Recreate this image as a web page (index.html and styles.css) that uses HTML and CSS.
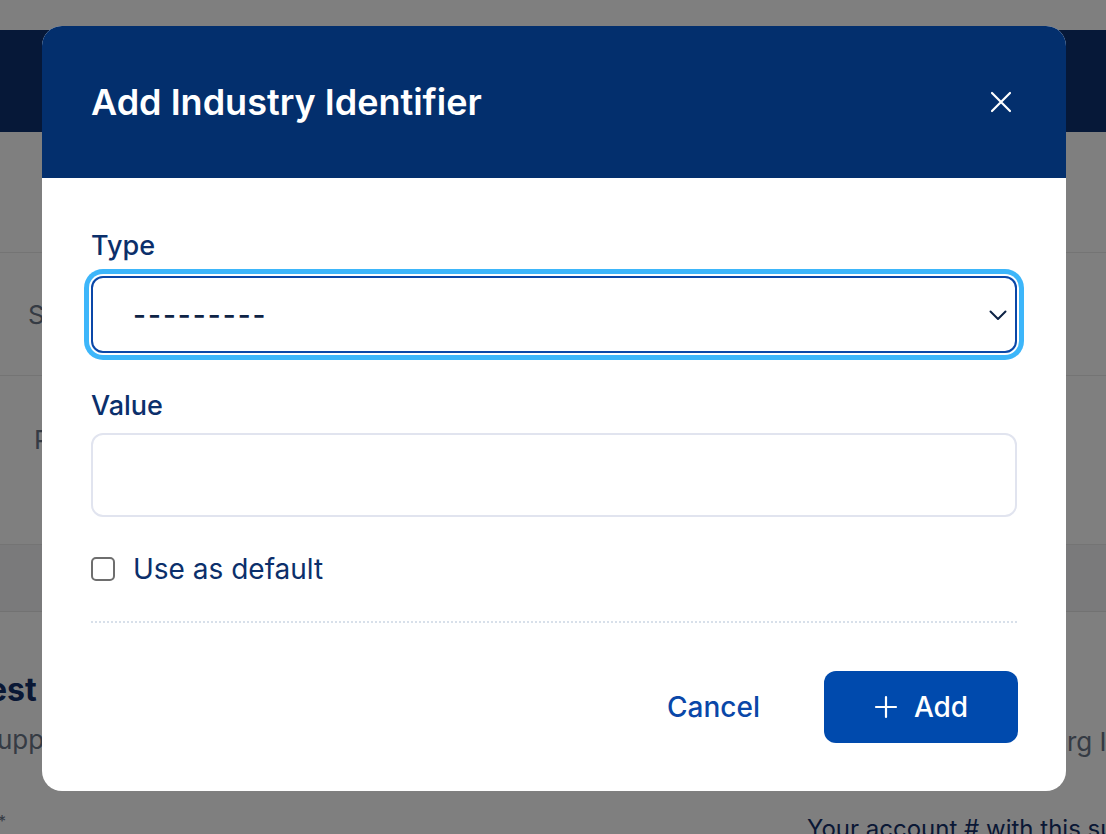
FILE: index.html
```html
<!DOCTYPE html>
<html lang="en">
<head>
  <meta charset="UTF-8" />
  <meta name="viewport" content="width=device-width, initial-scale=1" />
  <title>Add Industry Identifier</title>
  <link rel="stylesheet" href="styles.css">
</head>
<body>
  <div class="page">
    <div class="page-top"></div>
    <header class="page-header"></header>
    <div class="page-gap"></div>
    <div class="page-row row-short"><span class="row-label">Supplier name</span></div>
    <div class="page-row row-tall"><span class="row-label row-label-p">Phone number</span></div>
    <div class="page-band"></div>
    <div class="page-lower">
      <div class="lower-left">
        <h2 class="lower-title">est</h2>
        <p class="lower-text">upp</p>
        <p class="lower-star">*</p>
      </div>
      <div class="lower-right">
        <p class="lower-org">Org Id</p>
        <p class="lower-account">Your account # with this supplier</p>
      </div>
    </div>
  </div>

  <div class="overlay"></div>

  <div class="modal">
    <div class="modal-header">
      <h1 class="modal-title">Add Industry Identifier</h1>
      <button class="close-btn" aria-label="Close">
        <svg width="22" height="22" viewBox="0 0 22 22" fill="none" stroke="#ffffff" stroke-width="2.2" stroke-linecap="round">
          <path d="M2 2 L20 20 M20 2 L2 20" />
        </svg>
      </button>
    </div>

    <div class="modal-body">
      <label class="field-label">Type</label>
      <div class="select-box">
        <span class="select-text">---------</span>
        <svg class="chevron" width="18" height="11" viewBox="0 0 18 11" fill="none" stroke="#0d2345" stroke-width="2" stroke-linecap="round" stroke-linejoin="round">
          <path d="M1.5 1.5 L9 9 L16.5 1.5" />
        </svg>
      </div>

      <label class="field-label label-value">Value</label>
      <div class="text-input"></div>

      <div class="check-row">
        <span class="checkbox"></span>
        <span class="check-label">Use as default</span>
      </div>

      <div class="divider"></div>

      <div class="modal-footer">
        <button class="cancel-btn">Cancel</button>
        <button class="add-btn">
          <svg width="24" height="24" viewBox="0 0 24 24" fill="none" stroke="#ffffff" stroke-width="2.2" stroke-linecap="round">
            <path d="M12 2 V22 M2 12 H22" />
          </svg>
          Add
        </button>
      </div>
    </div>
  </div>
</body>
</html>
```

FILE: styles.css
```css
body {
  margin: 0;
  font-family: 'Inter', 'Noto Sans', sans-serif;
  background: #ffffff;
  overflow: hidden;
}

/* page behind the dialog */
.page {
  width: 1106px;
  height: 834px;
  overflow: hidden;
  white-space: nowrap;
}
.page-top {
  height: 30px;
}
.page-header {
  height: 102px;
  background: #0c3070;
}
.page-gap {
  height: 120px;
  border-bottom: 1px solid #e8e8e8;
}
.page-row {
  border-bottom: 1px solid #e8e8e8;
  padding-left: 28px;
  font-size: 26px;
  color: #6b7688;
}
.row-short {
  height: 122px;
  display: flex;
  align-items: center;
}
.row-tall {
  height: 169px;
  padding-top: 48px;
  box-sizing: border-box;
}
.row-label-p {
  margin-left: 6px;
}
.page-band {
  height: 66px;
  background: #f4f5f7;
  border-bottom: 1px solid #e4e4e4;
}
.page-lower {
  display: flex;
}
.lower-left {
  width: 807px;
  margin-left: -12px;
}
.lower-title {
  margin: 58px 0 0;
  font-size: 32px;
  line-height: 40px;
  font-weight: 700;
  color: #14306b;
}
.lower-text {
  margin: 15px 0 0 9px;
  font-size: 26px;
  line-height: 30px;
  color: #6b7688;
}
.lower-star {
  margin: 56px 0 0 10px;
  font-size: 16px;
  color: #6b7688;
}
.lower-right {
  width: 299px;
  margin-left: 12px;
}
.lower-org {
  margin: 115px 0 0 240px;
  font-size: 26px;
  line-height: 30px;
  color: #6b7688;
}
.lower-account {
  margin: 57px 0 0;
  font-size: 24px;
  line-height: 30px;
  color: #14306b;
}

.overlay {
  position: fixed;
  inset: 0;
  background: rgba(0, 0, 0, 0.5);
}

/* dialog */
.modal {
  position: fixed;
  left: 42px;
  top: 26px;
  width: 1024px;
  background: #ffffff;
  border-radius: 20px;
  overflow: hidden;
}
.modal-header {
  height: 152px;
  background: #032f6d;
  display: flex;
  align-items: center;
  justify-content: space-between;
  padding: 0 54px 0 49px;
}
.modal-title {
  margin: 0;
  color: #ffffff;
  font-size: 36px;
  font-weight: 600;
}
.close-btn {
  background: none;
  border: none;
  padding: 0;
  display: flex;
  cursor: pointer;
}

.modal-body {
  padding: 52px 49px 48px;
}
.field-label {
  display: block;
  font-size: 27px;
  line-height: 32px;
  font-weight: 500;
  color: #0b2f6b;
  margin-bottom: 14px;
}
.label-value {
  margin-top: 37px;
  margin-bottom: 11px;
}
.select-box {
  position: relative;
  height: 77px;
  box-sizing: border-box;
  border: 2px solid #0a47a8;
  border-radius: 12px;
  box-shadow: 0 0 0 2px #ffffff, 0 0 0 7px #3db6fa;
  display: flex;
  align-items: center;
  padding-left: 40px;
}
.select-text {
  font-size: 28px;
  font-weight: 500;
  color: #0d2345;
  letter-spacing: 2px;
}
.chevron {
  position: absolute;
  right: 8px;
  top: 32px;
}
.text-input {
  height: 84px;
  box-sizing: border-box;
  border: 2px solid #e1e4ef;
  border-radius: 12px;
}
.check-row {
  display: flex;
  align-items: center;
  gap: 18px;
  margin-top: 35px;
}
.checkbox {
  width: 24px;
  height: 24px;
  box-sizing: border-box;
  border: 2px solid #6e6e6e;
  border-radius: 5px;
}
.check-label {
  font-size: 28px;
  line-height: 34px;
  color: #0b2f6b;
}
.divider {
  margin-top: 35px;
  border-top: 2px dotted #d8e0ea;
}
.modal-footer {
  display: flex;
  justify-content: flex-end;
  align-items: center;
  gap: 64px;
  margin-top: 48px;
}
.cancel-btn {
  background: none;
  border: none;
  padding: 0;
  font-family: inherit;
  font-size: 28px;
  font-weight: 500;
  color: #0a47a8;
  cursor: pointer;
}
.add-btn {
  width: 194px;
  height: 72px;
  border: none;
  border-radius: 12px;
  background: #004aad;
  color: #ffffff;
  font-family: inherit;
  font-size: 28px;
  font-weight: 500;
  display: flex;
  align-items: center;
  justify-content: center;
  gap: 16px;
  margin-right: -1px;
  cursor: pointer;
}
```
